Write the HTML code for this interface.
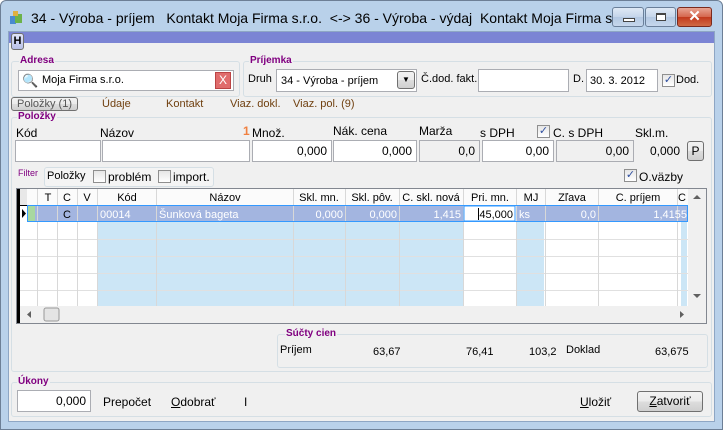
<!DOCTYPE html>
<html><head><meta charset="utf-8"><style>
*{box-sizing:border-box;margin:0;padding:0}
body{width:723px;height:430px;overflow:hidden;background:#fff;font-family:"Liberation Sans",sans-serif;font-size:12px;color:#000;position:relative}
.a{position:absolute}
.win{left:0;top:0;width:723px;height:430px;background:#b9d1ea;border:1px solid #6d7f96;border-radius:6px 6px 0 0}
.client{left:8px;top:31px;width:707px;height:391px;background:#f0f0f0;border:1px solid #8ea6c4}
.grp{position:absolute;border:1px solid #d5dfe5;border-radius:3px}
.lbl{position:absolute;color:#800080;font-size:10px;font-weight:bold;background:#f0f0f0;padding:0 1px}
.inp{position:absolute;background:#fff;border:1px solid #abadb3;height:22px}
.ro{background:#f0f0f0}
.r{text-align:right;padding-right:4px;line-height:20px}
.t{position:absolute;white-space:nowrap}
.cb{position:absolute;width:13px;height:13px;border:1px solid #8f8f8f;background:linear-gradient(#e6e6e6,#fff)}
.btn{position:absolute;border:1px solid #707070;border-radius:3px;background:linear-gradient(#f2f2f2,#ebebeb 50%,#dddddd 51%,#cfcfcf);text-align:center}
.tb{position:absolute;top:7px;height:20px;border:1px solid #6a7f99;border-radius:3px;background:linear-gradient(#dfe9f5,#c4d5ea 50%,#b3c8e2 51%,#c6d7ec)}
</style></head><body>
<div class="a win"></div>
<div class="t" style="left:8px;top:10px;width:16px;height:16px"><svg width="16" height="16"><rect x="2" y="6" width="6" height="8" fill="#4a8ad0"/><rect x="7" y="4" width="7" height="9" fill="#6cb24a"/><rect x="5" y="1" width="5" height="5" fill="#e0b040"/></svg></div>
<div class="t" style="left:31px;top:10px;font-size:14px">34 - Výroba - príjem&nbsp;&nbsp; Kontakt Moja Firma s.r.o.&nbsp; &lt;-&gt; 36 - Výroba - výdaj&nbsp; Kontakt Moja Firma s...</div>
<div class="tb" style="left:612px;width:32px"><div class="a" style="left:10px;top:10px;width:12px;height:4px;border:1px solid #444;background:#fff"></div></div>
<div class="tb" style="left:645px;width:31px"><div class="a" style="left:10px;top:5px;width:10px;height:8px;border:1px solid #444;border-top-width:2px;background:#fff"></div></div>
<div class="tb" style="left:677px;width:35px;border-color:#7a2a1e;background:linear-gradient(#e8a493,#d5664d 50%,#c2391d 51%,#d06a45)"><div class="a" style="left:0;top:0;width:33px;text-align:center;color:#fff;font-weight:bold;font-size:15px;line-height:18px">✕</div></div>
<div class="a client"></div>
<div class="a" style="left:9px;top:32px;width:705px;height:11px;background:#7b84d4"></div>
<div class="btn" style="left:11px;top:33px;width:13px;height:17px;font-weight:bold;font-size:11px;line-height:15px;background:linear-gradient(#e0e4f8,#b8c0e8)">H</div>

<div class="grp" style="left:11px;top:61px;width:229px;height:36px"></div>
<div class="lbl" style="left:19px;top:55px">Adresa</div>
<div class="inp" style="left:18px;top:70px;width:216px;height:21px"></div>
<div class="t" style="left:22px;top:73px;font-size:13px;color:#5080b0">&#128269;</div>
<div class="t" style="left:42px;top:74px;font-size:11px">Moja Firma s.r.o.</div>
<div class="a" style="left:215px;top:72px;width:16px;height:17px;background:#e06c6c;border:1px solid #b44;color:#fff;text-align:center;font-size:12px;line-height:15px">X</div>

<div class="grp" style="left:243px;top:61px;width:469px;height:36px"></div>
<div class="lbl" style="left:249px;top:55px">Príjemka</div>
<div class="t" style="left:248px;top:73px;font-size:11px">Druh</div>
<div class="inp" style="left:276px;top:69px;width:141px;height:23px"></div>
<div class="t" style="left:281px;top:75px;font-size:11px">34 - Výroba - príjem</div>
<div class="btn" style="left:397px;top:71px;width:18px;height:18px;font-size:8px;line-height:16px">▼</div>
<div class="t" style="left:421px;top:73px;font-size:11px">Č.dod. fakt.</div>
<div class="inp" style="left:478px;top:69px;width:91px;height:23px"></div>
<div class="t" style="left:573px;top:73px;font-size:11px">D.</div>
<div class="inp" style="left:586px;top:69px;width:72px;height:23px"></div>
<div class="t" style="left:590px;top:75px;font-size:11px">30. 3. 2012</div>
<div class="cb" style="left:662px;top:74px;color:#3050a0;font-size:11px;line-height:11px;text-align:center">✓</div>
<div class="t" style="left:676px;top:74px;font-size:11px">Dod.</div>

<div class="btn" style="left:11px;top:97px;width:67px;height:14px;font-size:11px;line-height:12px;color:#555">Položky (1)</div>
<div class="t" style="left:102px;top:98px;font-size:11px;color:#704010">Údaje</div>
<div class="t" style="left:166px;top:98px;font-size:11px;color:#704010">Kontakt</div>
<div class="t" style="left:230px;top:98px;font-size:11px;color:#704010">Viaz. dokl.</div>
<div class="t" style="left:293px;top:98px;font-size:11px;color:#704010">Viaz. pol. (9)</div>

<div class="grp" style="left:11px;top:117px;width:701px;height:255px"></div>
<div class="lbl" style="left:17px;top:111px">Položky</div>
<div class="t" style="left:16px;top:126px">Kód</div>
<div class="t" style="left:100px;top:126px">Názov</div>
<div class="t" style="left:243px;top:124px;color:#f08040;font-weight:bold">1</div>
<div class="t" style="left:252px;top:126px">Množ.</div>
<div class="t" style="left:333px;top:124px">Nák. cena</div>
<div class="t" style="left:419px;top:124px">Marža</div>
<div class="t" style="left:480px;top:126px">s DPH</div>
<div class="cb" style="left:537px;top:125px;color:#3050a0;font-size:11px;line-height:11px;text-align:center">✓</div>
<div class="t" style="left:553px;top:126px">C. s DPH</div>
<div class="t" style="left:635px;top:126px">Skl.m.</div>
<div class="inp" style="left:15px;top:140px;width:86px"></div>
<div class="inp" style="left:102px;top:140px;width:148px"></div>
<div class="inp r" style="left:252px;top:140px;width:80px">0,000</div>
<div class="inp r" style="left:333px;top:140px;width:84px">0,000</div>
<div class="inp ro r" style="left:419px;top:140px;width:61px">0,0</div>
<div class="inp r" style="left:482px;top:140px;width:72px">0,00</div>
<div class="inp ro r" style="left:556px;top:140px;width:78px">0,00</div>
<div class="t" style="left:650px;top:144px">0,000</div>
<div class="btn" style="left:687px;top:141px;width:17px;height:20px;line-height:18px">P</div>

<div class="t" style="left:18px;top:168px;font-size:9px;color:#800080">Filter</div>
<div class="grp" style="left:44px;top:167px;width:170px;height:20px;background:#f4f4f4"></div>
<div class="t" style="left:47px;top:170px;font-size:11px">Položky</div>
<div class="cb" style="left:93px;top:170px"></div>
<div class="t" style="left:108px;top:170px">problém</div>
<div class="cb" style="left:158px;top:170px"></div>
<div class="t" style="left:173px;top:170px">import.</div>
<div class="cb" style="left:624px;top:169px;color:#3050a0;font-size:11px;line-height:11px;text-align:center">✓</div>
<div class="t" style="left:639px;top:170px">O.väzby</div>

<div class="a" style="left:16px;top:188px;width:691px;height:136px;background:#fff;border:1px solid #828790"></div>
<svg class="a" style="left:17px;top:189px" width="689" height="134" font-family="Liberation Sans" font-size="11">
<rect x="0" y="0" width="689" height="134" fill="#fff"/>
<g fill="#cce6f6"><rect x="80" y="33" width="366" height="84"/><rect x="499" y="33" width="28" height="84"/><rect x="664" y="33" width="6" height="84"/></g>
<rect x="0" y="0" width="671" height="16" fill="#fbfbfb"/>
<rect x="10" y="16" width="661" height="17" fill="#a3b5e0"/>
<rect x="10" y="16" width="8" height="17" fill="#a8d8a0"/>
<rect x="446" y="16" width="53" height="17" fill="#fff"/>
<line x1="0" y1="16.5" x2="671" y2="16.5" stroke="#000"/>
<g stroke="#e0e0e0"><line x1="0" y1="50.5" x2="671" y2="50.5"/><line x1="0" y1="67.5" x2="671" y2="67.5"/><line x1="0" y1="84.5" x2="671" y2="84.5"/><line x1="0" y1="101.5" x2="671" y2="101.5"/></g>
<g stroke="#d8d8d8">
<line x1="20.5" y1="0" x2="20.5" y2="117"/><line x1="40.5" y1="0" x2="40.5" y2="117"/><line x1="60.5" y1="0" x2="60.5" y2="117"/><line x1="80.5" y1="0" x2="80.5" y2="117"/><line x1="139.5" y1="0" x2="139.5" y2="117"/><line x1="276.5" y1="0" x2="276.5" y2="117"/><line x1="328.5" y1="0" x2="328.5" y2="117"/><line x1="382.5" y1="0" x2="382.5" y2="117"/><line x1="446.5" y1="0" x2="446.5" y2="117"/><line x1="499.5" y1="0" x2="499.5" y2="117"/><line x1="528.5" y1="0" x2="528.5" y2="117"/><line x1="581.5" y1="0" x2="581.5" y2="117"/><line x1="660.5" y1="0" x2="660.5" y2="117"/>
</g>
<rect x="0" y="0" width="10" height="16" fill="#e8e8e8"/>
<line x1="1.5" y1="0" x2="1.5" y2="134" stroke="#000" stroke-width="3"/>
<path d="M5 20 L9 24.5 L5 29Z" fill="#000"/>
<rect x="10.5" y="16.5" width="660" height="16" fill="none" stroke="#3399ff"/>
<rect x="447" y="17" width="51" height="15" fill="none" stroke="#3399ff"/>
<line x1="461.5" y1="19" x2="461.5" y2="31" stroke="#000"/>
<g text-anchor="middle" fill="#000"><text x="31" y="12">T</text><text x="50" y="12">C</text><text x="70" y="12">V</text><text x="110" y="12">Kód</text><text x="208" y="12">Názov</text><text x="302" y="12">Skl. mn.</text><text x="355" y="12">Skl. pôv.</text><text x="414" y="12">C. skl. nová</text><text x="473" y="12">Pri. mn.</text><text x="514" y="12">MJ</text><text x="555" y="12">Zľava</text><text x="621" y="12">C. príjem</text><text x="665" y="12">C</text><text x="50" y="29">C</text></g>
<g fill="#fff"><text x="83" y="29">00014</text><text x="142" y="29">Šunková bageta</text><text x="502" y="29">ks</text>
<g text-anchor="end"><text x="326" y="29">0,000</text><text x="380" y="29">0,000</text><text x="444" y="29">1,415</text><text x="579" y="29">0,0</text><text x="670" y="29">1,4155</text></g></g>
<text x="496" y="29" text-anchor="end" fill="#000">45,000</text>
<rect x="671" y="0" width="18" height="117" fill="#f0f0f0"/>
<path d="M676 10 L680 6 L684 10Z" fill="#606060"/><path d="M676 105 L680 109 L684 105Z" fill="#606060"/>
<rect x="0" y="117" width="689" height="17" fill="#f0f0f0"/>
<line x1="1.5" y1="117" x2="1.5" y2="134" stroke="#000" stroke-width="3"/>
<path d="M10 125.5 L14 122 L14 129Z" fill="#606060"/>
<rect x="27" y="119" width="15" height="13" rx="2" fill="#e4e4e4" stroke="#999"/>
<path d="M663 122 L667 125.5 L663 129Z" fill="#606060"/>
</svg>

<div class="grp" style="left:277px;top:334px;width:431px;height:34px"></div>
<div class="lbl" style="left:285px;top:328px">Súčty cien</div>
<div class="t" style="left:280px;top:344px;font-size:11px">Príjem</div>
<div class="t" style="left:373px;top:346px;font-size:11px">63,67</div>
<div class="t" style="left:466px;top:346px;font-size:11px">76,41</div>
<div class="t" style="left:529px;top:346px;font-size:11px">103,2</div>
<div class="t" style="left:566px;top:344px;font-size:11px">Doklad</div>
<div class="t" style="left:655px;top:346px;font-size:11px">63,675</div>

<div class="grp" style="left:11px;top:382px;width:701px;height:35px"></div>
<div class="lbl" style="left:17px;top:376px">Úkony</div>
<div class="inp r" style="left:17px;top:390px;width:74px;height:22px">0,000</div>
<div class="t" style="left:103px;top:395px">Prepočet</div>
<div class="t" style="left:171px;top:395px"><u>O</u>dobrať</div>
<div class="t" style="left:244px;top:395px">I</div>
<div class="t" style="left:580px;top:395px"><u>U</u>ložiť</div>
<div class="btn" style="left:637px;top:391px;width:66px;height:21px;line-height:19px"><u>Z</u>atvoriť</div>
</body></html>
